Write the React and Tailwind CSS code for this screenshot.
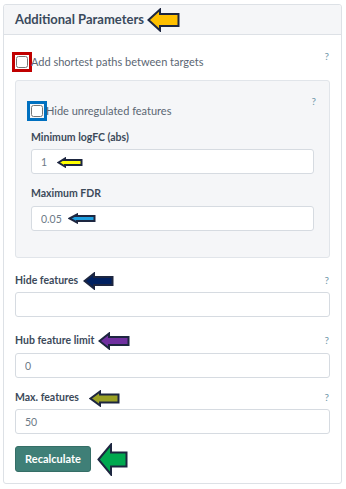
import React from "react";

// Left-pointing annotation arrow with a dark outline
function Arrow({ w, h, head, shaft, fill, className = "" }) {
  const t = (h - shaft) / 2;
  const b = (h + shaft) / 2;
  const d = `M1.5 ${h / 2} L${head} 1.5 L${head} ${t} L${w - 1.5} ${t} L${w - 1.5} ${b} L${head} ${b} L${head} ${h - 1.5} Z`;
  return (
    <svg width={w} height={h} viewBox={`0 0 ${w} ${h}`} className={`shrink-0 ${className}`}>
      <path d={d} fill={fill} stroke="#1d2640" strokeWidth="2" strokeLinejoin="miter" />
    </svg>
  );
}

function Help({ className = "" }) {
  return <span className={`text-[10px] leading-none text-[#6f98aa] self-start ${className}`}>?</span>;
}

function Field({ value, arrow }) {
  return (
    <div className="relative">
      <input
        readOnly
        value={value}
        className="block w-full h-[25px] rounded-[3px] border border-[#d6dbe1] bg-white pl-[9px] text-[10.5px] text-[#6d7a88] outline-none"
      />
      {arrow}
    </div>
  );
}

export default function App() {
  return (
    <div className="min-h-screen bg-white pt-[4px] pl-[3px]" style={{ fontFamily: "Lato, 'Open Sans', sans-serif" }}>
      <div className="w-[339px] rounded-[3px] border border-[#dde1e6] bg-white">
        {/* Header */}
        <div className="h-[30px] flex items-center gap-[3px] pl-[11px] bg-[#f5f6f8] border-b border-[#dde1e6] rounded-t-[3px]">
          <span className="text-[13px] font-bold text-[#3a4a5c]">Additional Parameters</span>
          <Arrow w={33} h={24} head={13} shaft={12} fill="#ffc000" />
        </div>

        <div className="px-[11px] pb-[11px]">
          {/* Shortest paths checkbox */}
          <div className="mt-[18px] h-[18px] flex items-center justify-between">
            <label className="flex items-center gap-[3px] text-[11px] text-[#5b6673]">
              <input
                type="checkbox"
                className="w-[12px] h-[12px] m-0 ml-[1px] outline-[3px] outline-solid outline-[#c00000] outline-offset-[1px]"
              />
              Add shortest paths between targets
            </label>
            <Help className="-mt-[2px] mr-[1px]" />
          </div>

          {/* Nested parameters */}
          <div className="mt-[9px] rounded-[3px] border border-[#e1e5ea] bg-[#f5f6f8] px-[15px] pt-[21px] pb-[26px]">
            <div className="h-[18px] flex items-center justify-between">
              <label className="flex items-center gap-[3px] text-[11px] text-[#5b6673]">
                <input
                  type="checkbox"
                  className="w-[12px] h-[12px] m-0 outline-[3px] outline-solid outline-[#0070c0] outline-offset-[1px]"
                />
                Hide unregulated features
              </label>
              <Help className="-mt-[6px] -mr-[2px]" />
            </div>

            <div className="mt-[11px] h-[14px] flex items-center text-[10.5px] font-bold text-[#3c4a5a]">Minimum logFC (abs)</div>
            <div className="mt-[4px]">
              <Field
                value="1"
                arrow={<Arrow w={26} h={11} head={8} shaft={5} fill="#ffff00" className="absolute left-[26px] top-[8px]" />}
              />
            </div>

            <div className="mt-[13px] h-[14px] flex items-center text-[10.5px] font-bold text-[#3c4a5a]">Maximum FDR</div>
            <div className="mt-[5px]">
              <Field
                value="0.05"
                arrow={<Arrow w={28} h={11} head={9} shaft={5} fill="#1ea0e0" className="absolute left-[37px] top-[7px]" />}
              />
            </div>
          </div>

          {/* Hide features */}
          <div className="mt-[16px] h-[14px] flex items-center justify-between">
            <div className="flex items-center gap-[5px] text-[10.5px] font-bold text-[#3c4a5a]">
              Hide features
              <Arrow w={31} h={18} head={11} shaft={8} fill="#002060" />
            </div>
            <Help className="mt-[1px] mr-[1px]" />
          </div>
          <div className="mt-[4px]">
            <Field value="" />
          </div>

          {/* Hub feature limit */}
          <div className="mt-[17px] h-[14px] flex items-center justify-between">
            <div className="flex items-center gap-[4px] text-[10.5px] font-bold text-[#3c4a5a]">
              Hub feature limit
              <Arrow w={32} h={18} head={11} shaft={8} fill="#7030a0" />
            </div>
            <Help className="mt-[1px] mr-[1px]" />
          </div>
          <div className="mt-[5px]">
            <Field value="0" />
          </div>

          {/* Max features */}
          <div className="mt-[13px] h-[14px] flex items-center justify-between">
            <div className="flex items-center gap-[10px] text-[10.5px] font-bold text-[#3c4a5a]">
              Max. features
              <Arrow w={31} h={17} head={11} shaft={8} fill="#9aa024" />
            </div>
            <Help className="mt-[1px] mr-[1px]" />
          </div>
          <div className="mt-[4px]">
            <Field value="50" />
          </div>

          {/* Recalculate */}
          <div className="mt-[12px] h-[26px] flex items-center gap-[6px]">
            <button className="h-[26px] w-[76px] rounded-[3px] border border-[#356e66] bg-[#3f7f77] text-[11px] font-bold text-white">
              Recalculate
            </button>
            <Arrow w={31} h={33} head={14} shaft={14} fill="#00a84f" />
          </div>
        </div>
      </div>
    </div>
  );
}
